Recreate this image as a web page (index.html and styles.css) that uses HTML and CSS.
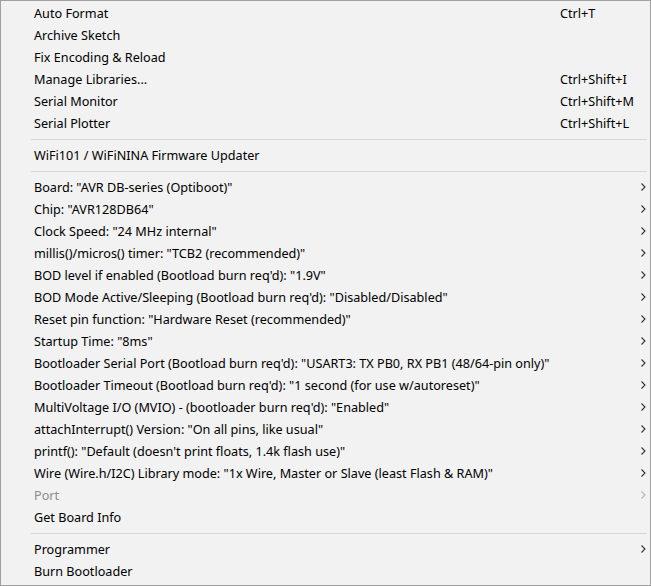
FILE: index.html
```html
<!DOCTYPE html>
<html>
<head>
<meta charset="utf-8">
<link rel="stylesheet" href="styles.css">
</head>
<body>
<div class="menu">
  <div class="item"><span class="label">Auto Format</span><span class="key">Ctrl+T</span></div>
  <div class="item"><span class="label">Archive Sketch</span></div>
  <div class="item"><span class="label">Fix Encoding &amp; Reload</span></div>
  <div class="item"><span class="label">Manage Libraries...</span><span class="key">Ctrl+Shift+I</span></div>
  <div class="item"><span class="label">Serial Monitor</span><span class="key">Ctrl+Shift+M</span></div>
  <div class="item"><span class="label">Serial Plotter</span><span class="key">Ctrl+Shift+L</span></div>
  <div class="sep"></div>
  <div class="item"><span class="label">WiFi101 / WiFiNINA Firmware Updater</span></div>
  <div class="sep"></div>
  <div class="item sub"><span class="label">Board: "AVR DB-series (Optiboot)"</span><svg class="arrow" width="5" height="8" viewBox="0 0 5 8"><path d="M0.5 0.5 L4 4 L0.5 7.5" fill="none" stroke="currentColor" stroke-width="1.1"/></svg></div>
  <div class="item sub"><span class="label">Chip: "AVR128DB64"</span><svg class="arrow" width="5" height="8" viewBox="0 0 5 8"><path d="M0.5 0.5 L4 4 L0.5 7.5" fill="none" stroke="currentColor" stroke-width="1.1"/></svg></div>
  <div class="item sub"><span class="label">Clock Speed: "24 MHz internal"</span><svg class="arrow" width="5" height="8" viewBox="0 0 5 8"><path d="M0.5 0.5 L4 4 L0.5 7.5" fill="none" stroke="currentColor" stroke-width="1.1"/></svg></div>
  <div class="item sub"><span class="label">millis()/micros() timer: "TCB2 (recommended)"</span><svg class="arrow" width="5" height="8" viewBox="0 0 5 8"><path d="M0.5 0.5 L4 4 L0.5 7.5" fill="none" stroke="currentColor" stroke-width="1.1"/></svg></div>
  <div class="item sub"><span class="label">BOD level if enabled (Bootload burn req'd): "1.9V"</span><svg class="arrow" width="5" height="8" viewBox="0 0 5 8"><path d="M0.5 0.5 L4 4 L0.5 7.5" fill="none" stroke="currentColor" stroke-width="1.1"/></svg></div>
  <div class="item sub"><span class="label">BOD Mode Active/Sleeping (Bootload burn req'd): "Disabled/Disabled"</span><svg class="arrow" width="5" height="8" viewBox="0 0 5 8"><path d="M0.5 0.5 L4 4 L0.5 7.5" fill="none" stroke="currentColor" stroke-width="1.1"/></svg></div>
  <div class="item sub"><span class="label">Reset pin function: "Hardware Reset (recommended)"</span><svg class="arrow" width="5" height="8" viewBox="0 0 5 8"><path d="M0.5 0.5 L4 4 L0.5 7.5" fill="none" stroke="currentColor" stroke-width="1.1"/></svg></div>
  <div class="item sub"><span class="label">Startup Time: "8ms"</span><svg class="arrow" width="5" height="8" viewBox="0 0 5 8"><path d="M0.5 0.5 L4 4 L0.5 7.5" fill="none" stroke="currentColor" stroke-width="1.1"/></svg></div>
  <div class="item sub"><span class="label">Bootloader Serial Port (Bootload burn req'd): "USART3: TX PB0, RX PB1 (48/64-pin only)"</span><svg class="arrow" width="5" height="8" viewBox="0 0 5 8"><path d="M0.5 0.5 L4 4 L0.5 7.5" fill="none" stroke="currentColor" stroke-width="1.1"/></svg></div>
  <div class="item sub"><span class="label">Bootloader Timeout (Bootload burn req'd): "1 second (for use w/autoreset)"</span><svg class="arrow" width="5" height="8" viewBox="0 0 5 8"><path d="M0.5 0.5 L4 4 L0.5 7.5" fill="none" stroke="currentColor" stroke-width="1.1"/></svg></div>
  <div class="item sub"><span class="label">MultiVoltage I/O (MVIO) - (bootloader burn req'd): "Enabled"</span><svg class="arrow" width="5" height="8" viewBox="0 0 5 8"><path d="M0.5 0.5 L4 4 L0.5 7.5" fill="none" stroke="currentColor" stroke-width="1.1"/></svg></div>
  <div class="item sub"><span class="label">attachInterrupt() Version: "On all pins, like usual"</span><svg class="arrow" width="5" height="8" viewBox="0 0 5 8"><path d="M0.5 0.5 L4 4 L0.5 7.5" fill="none" stroke="currentColor" stroke-width="1.1"/></svg></div>
  <div class="item sub"><span class="label">printf(): "Default (doesn't print floats, 1.4k flash use)"</span><svg class="arrow" width="5" height="8" viewBox="0 0 5 8"><path d="M0.5 0.5 L4 4 L0.5 7.5" fill="none" stroke="currentColor" stroke-width="1.1"/></svg></div>
  <div class="item sub"><span class="label">Wire (Wire.h/I2C) Library mode: "1x Wire, Master or Slave (least Flash &amp; RAM)"</span><svg class="arrow" width="5" height="8" viewBox="0 0 5 8"><path d="M0.5 0.5 L4 4 L0.5 7.5" fill="none" stroke="currentColor" stroke-width="1.1"/></svg></div>
  <div class="item sub disabled"><span class="label">Port</span><svg class="arrow" width="5" height="8" viewBox="0 0 5 8"><path d="M0.5 0.5 L4 4 L0.5 7.5" fill="none" stroke="currentColor" stroke-width="1.1"/></svg></div>
  <div class="item"><span class="label">Get Board Info</span></div>
  <div class="sep"></div>
  <div class="item sub"><span class="label">Programmer</span><svg class="arrow" width="5" height="8" viewBox="0 0 5 8"><path d="M0.5 0.5 L4 4 L0.5 7.5" fill="none" stroke="currentColor" stroke-width="1.1"/></svg></div>
  <div class="item"><span class="label">Burn Bootloader</span></div>
</div>
</body>
</html>
```
FILE: styles.css
```css
html, body {
  margin: 0;
  padding: 0;
  background: #f2f2f2;
}
.menu {
  box-sizing: border-box;
  width: 651px;
  height: 586px;
  border: 1px solid #a0a0a0;
  background: #f2f2f2;
  padding: 1px 0 2px 0;
  font-family: "Noto Sans", "Open Sans", sans-serif;
  font-size: 12.65px;
  color: #000;
  display: flex;
  flex-direction: column;
}
.item {
  height: 22px;
  display: flex;
  align-items: center;
  padding-left: 33px;
  position: relative;
}
.label {
  flex: 0 0 526px;
  white-space: nowrap;
}
.key {
  white-space: nowrap;
}
.arrow {
  position: absolute;
  left: 640px;
  top: 7px;
  color: #333;
}
.disabled {
  color: #8c8c8c;
}
.disabled .arrow {
  color: #b5b5b5;
}
.sep {
  height: 10px;
  display: flex;
  align-items: center;
  padding-left: 30px;
  padding-right: 3px;
}
.sep::before {
  content: "";
  flex: 1;
  height: 1px;
  background: #d7d7d7;
}
```
